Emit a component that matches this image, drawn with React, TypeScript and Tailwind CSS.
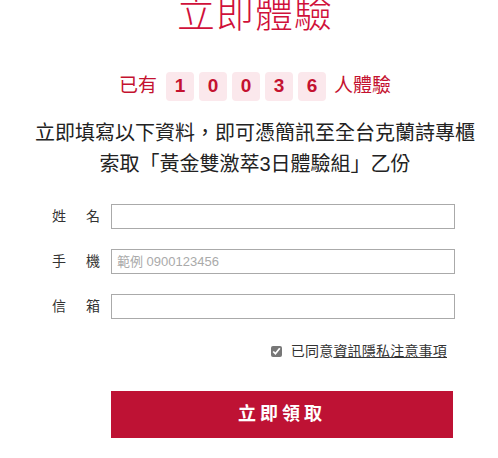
import { useState } from "react";

const font = {
  fontFamily: '"Liberation Sans", "Noto Sans CJK TC", sans-serif',
};

const digits = ["1", "0", "0", "3", "6"];

function Field({
  label,
  placeholder,
}: {
  label: [string, string];
  placeholder?: string;
}) {
  return (
    <div className="flex items-center">
      <div className="flex w-[48px] justify-between text-[14px] text-[#333]">
        <span>{label[0]}</span>
        <span>{label[1]}</span>
      </div>
      <input
        type="text"
        placeholder={placeholder}
        className="ml-[11px] h-[25px] w-[344px] border border-[#aaa] bg-white px-[5px] text-[13px] text-[#333] outline-none placeholder:text-[#aaa]"
      />
    </div>
  );
}

export default function App() {
  const [agree, setAgree] = useState(true);

  return (
    <div className="min-h-[458px] overflow-hidden bg-white" style={font}>
      <div className="flex flex-col items-center pl-[12px]">
        <h1 className="-mt-[5px] text-[38px] font-light leading-none tracking-[1px] text-[#d0103a]">
          立即體驗
        </h1>

        <div className="mt-[39px] flex items-center text-[19px] text-[#c41230]">
          <span className="mr-[9px]">已有</span>
          <div className="flex gap-[5px]">
            {digits.map((d, i) => (
              <span
                key={i}
                className="flex h-[29px] w-[28px] items-center justify-center rounded-[4px] bg-[#fbe8ec] text-[19px] font-bold text-[#c41230]"
              >
                {d}
              </span>
            ))}
          </div>
          <span className="ml-[8px]">人體驗</span>
        </div>

        <p className="mt-[17px] text-center text-[20px] leading-[31px] text-[#222]">
          立即填寫以下資料，即可憑簡訊至全台克蘭詩專櫃
          <br />
          索取「黃金雙激萃3日體驗組」乙份
        </p>

        <form className="mt-[24px] flex flex-col gap-[20px] pr-[3px]">
          <Field label={["姓", "名"]} />
          <Field label={["手", "機"]} placeholder="範例 0900123456" />
          <Field label={["信", "箱"]} />

          <label className="mt-[2px] flex items-center justify-end gap-[9px] pr-[8px] text-[14px] tracking-[0.2px] text-[#333]">
            <input
              type="checkbox"
              checked={agree}
              onChange={() => setAgree(!agree)}
              className="h-[11px] w-[11px] accent-[#777]"
            />
            <span>
              已同意<span className="underline">資訊隱私注意事項</span>
            </span>
          </label>

          <button
            type="button"
            className="ml-[59px] mt-[9px] h-[47px] w-[342px] bg-[#be1234] text-[18px] font-bold tracking-[4px] text-white"
          >
            立即領取
          </button>
        </form>
      </div>
    </div>
  );
}
